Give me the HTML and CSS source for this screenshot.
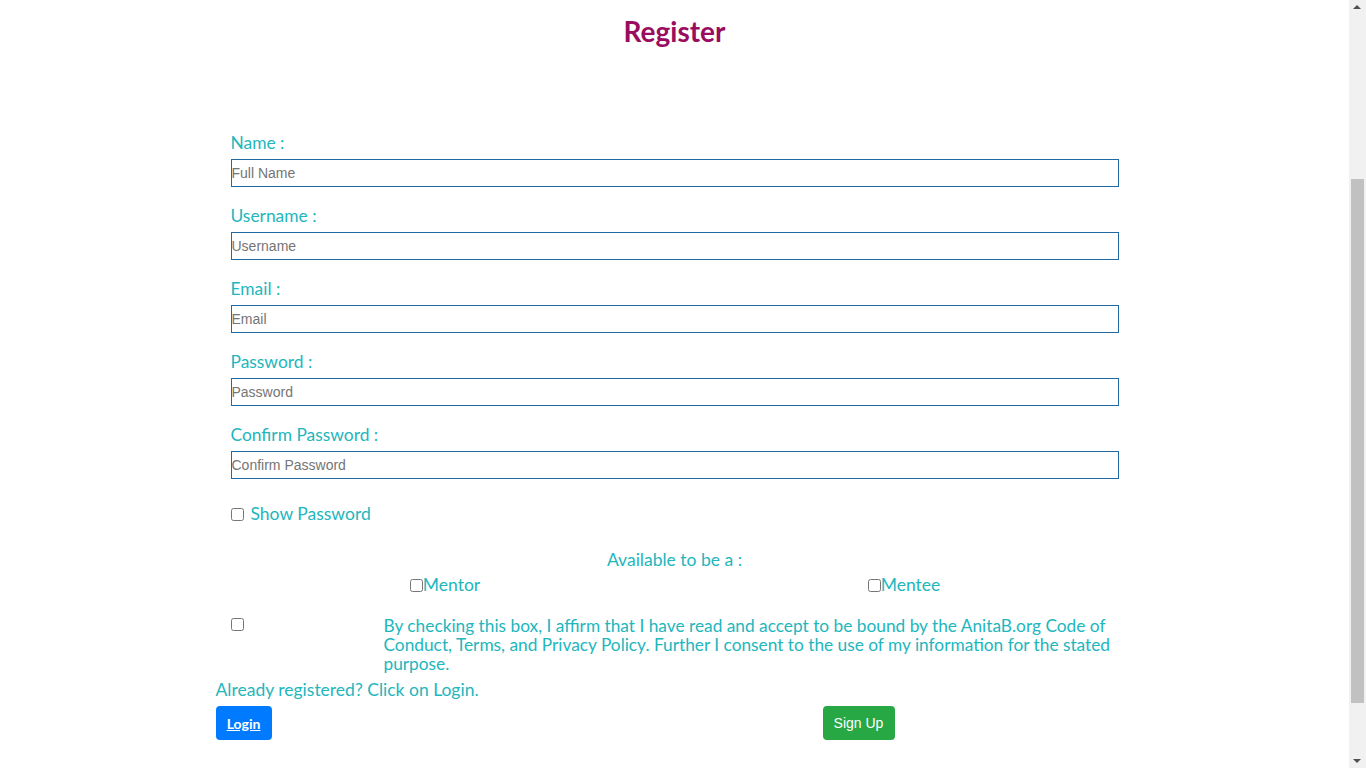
FILE: index.html
```html
<!DOCTYPE html>
<html lang="en">
<head>
<meta charset="utf-8">
<title>Register</title>
<link rel="stylesheet" href="styles.css">
</head>
<body>
<div class="page">
  <h1 class="title">Register</h1>
  <form class="form">
    <div class="field">
      <label class="label" for="name">Name :</label>
      <input class="input" id="name" type="text" placeholder="Full Name">
    </div>
    <div class="field">
      <label class="label" for="username">Username :</label>
      <input class="input" id="username" type="text" placeholder="Username">
    </div>
    <div class="field">
      <label class="label" for="email">Email :</label>
      <input class="input" id="email" type="email" placeholder="Email">
    </div>
    <div class="field">
      <label class="label" for="password">Password :</label>
      <input class="input" id="password" type="password" placeholder="Password">
    </div>
    <div class="field">
      <label class="label" for="confirm">Confirm Password :</label>
      <input class="input" id="confirm" type="password" placeholder="Confirm Password">
    </div>
    <div class="show-row">
      <input class="check" type="checkbox" id="show"> <label class="text" for="show">Show Password</label>
    </div>
  </form>
  <div class="available">Available to be a :</div>
  <div class="roles">
    <div class="role"><input class="check" type="checkbox" id="mentor"><label for="mentor">Mentor</label></div>
    <div class="role"><input class="check" type="checkbox" id="mentee"><label for="mentee">Mentee</label></div>
  </div>
  <div class="agree">
    <div class="agree-box"><input class="check" type="checkbox" id="agree"></div>
    <label class="agree-text" for="agree">By checking this box, I affirm that I have read and accept to be bound by the AnitaB.org Code of Conduct, Terms, and Privacy Policy. Further I consent to the use of my information for the stated purpose.</label>
  </div>
  <p class="already">Already registered? Click on Login.</p>
  <div class="actions">
    <button class="btn btn-login" type="button"><a href="#" class="btn-link">Login</a></button>
    <button class="btn btn-signup" type="submit">Sign Up</button>
  </div>
</div>
<div class="scrollbar" aria-hidden="true">
  <span class="scroll-arrow scroll-up"></span>
  <span class="scroll-thumb"></span>
  <span class="scroll-arrow scroll-down"></span>
</div>
</body>
</html>
```
FILE: styles.css
```css
html {
  overflow: hidden;
}

body {
  margin: 0 17px 0 0;
  font-family: Lato, "Open Sans", sans-serif;
  background: #ffffff;
  color: #22b6bd;
}

.page {
  width: 918px;
  margin: 0 auto;
}

.title {
  margin: 0;
  padding-top: 14px;
  font-size: 28px;
  line-height: 34px;
  font-weight: 700;
  color: #990c5e;
  text-align: center;
}

.form {
  padding: 84px 15px 0;
}

.field {
  margin-bottom: 18px;
}

.label {
  display: block;
  font-size: 17.4px;
  line-height: 22px;
  margin-bottom: 5px;
}

.input {
  display: block;
  width: 100%;
  height: 28px;
  box-sizing: border-box;
  margin: 0;
  padding: 0;
  border: 1px solid #1f6aa5;
  border-radius: 0;
  font-family: "Liberation Sans", Arial, sans-serif;
  font-size: 14px;
  color: #333;
  outline: none;
}

.input::placeholder {
  color: #757575;
}

.show-row {
  margin-top: 24px;
  display: flex;
  align-items: center;
  font-size: 17.5px;
  line-height: 22px;
}

.show-row .check {
  margin: 0 3px 0 0;
}

.text {
  margin-left: 4px;
}

.check {
  width: 13px;
  height: 13px;
}

.available {
  margin-top: 24px;
  text-align: center;
  font-size: 17.5px;
  line-height: 22px;
}

.roles {
  display: grid;
  grid-template-columns: 1fr 1fr;
  margin-top: 3px;
  font-size: 17.5px;
  line-height: 22px;
}

.role {
  display: flex;
  justify-content: center;
  align-items: center;
}

.role .check {
  margin: 0;
}

.agree {
  display: grid;
  grid-template-columns: 153px 1fr;
  margin-top: 20px;
}

.agree-box {
  padding: 2px 15px 0;
}

.agree-box .check {
  margin: 0;
  display: block;
}

.agree-text {
  padding: 0 15px;
  font-size: 17.3px;
  line-height: 19px;
}

.already {
  margin: 6px 0 5px;
  font-size: 17.5px;
  line-height: 22px;
}

.actions {
  display: flex;
  align-items: center;
}

.btn {
  height: 34px;
  border: none;
  border-radius: 4px;
  color: #ffffff;
  cursor: pointer;
}

.btn-login {
  width: 56px;
  padding: 0;
  background: #007bff;
  font-family: Lato, sans-serif;
  font-size: 14px;
  font-weight: 700;
}

.btn-link {
  color: #ffffff;
  text-decoration: underline;
}

.btn-signup {
  width: 72px;
  margin-left: 551px;
  padding: 0;
  background: #28a745;
  font-family: "Liberation Sans", Arial, sans-serif;
  font-size: 14px;
}

.scrollbar {
  position: fixed;
  top: 0;
  right: 0;
  width: 17px;
  height: 100vh;
  background: #f1f1f1;
}

.scroll-thumb {
  position: absolute;
  top: 179px;
  left: 2px;
  width: 13px;
  height: 524px;
  background: #c1c1c1;
}

.scroll-arrow {
  position: absolute;
  left: 4px;
  width: 0;
  height: 0;
  border-left: 4px solid transparent;
  border-right: 4px solid transparent;
}

.scroll-up {
  top: 5px;
  border-bottom: 4px solid #505050;
}

.scroll-down {
  bottom: 5px;
  border-top: 4px solid #505050;
}
```
